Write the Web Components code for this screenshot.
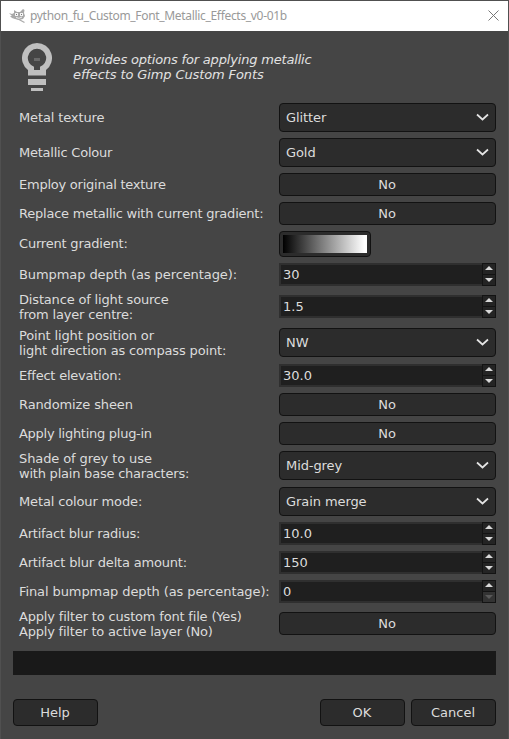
<!DOCTYPE html>
<html lang="en">
<head>
<meta charset="utf-8">
<title>python_fu_Custom_Font_Metallic_Effects_v0-01b</title>
<style>
html,body{margin:0;height:100%;background:#454545;overflow:hidden}
body{font:13px/15px "DejaVu Sans",sans-serif;color:#dcdcdc}
</style>
</head>
<body>
<effect-dialog></effect-dialog>
<script>
function define(name, html, setup) {
  const t = document.createElement('template');
  t.innerHTML = html;
  customElements.define(name, class extends HTMLElement {
    connectedCallback() {
      if (this.shadowRoot) return;
      this.attachShadow({mode: 'open'}).append(t.content.cloneNode(true));
      if (setup) setup(this, this.shadowRoot);
    }
  });
}
const box = 'box-sizing:border-box;background:#2c2c2c;border:1px solid #121212;border-radius:4px;';

define('title-bar', `<style>
:host{display:flex;align-items:center;height:30px;background:#fff;color:#999;font:12px/16px "Noto Sans","Open Sans",sans-serif;padding:0 9px 0 8px}
span{flex:1;margin-left:4px;white-space:pre;letter-spacing:-.32px}
.x{margin-bottom:1px}
</style>
<svg width="17" height="15" viewBox="0 0 17 15"><path fill="#a9a9a9" d="M0 4L3 5L5 4L5 1L8 3L11 3L14 0L15.500 1L15 4L16 7L14 10L10 11L6 10L3 9L1 7L3 7Z"/><path fill="#f4f4f4" d="M6 4h3v3H6zM11 4h3v3h-3z"/><path d="M7 5h1v1H7zM12 5h1v1h-1z" fill="#777"/><path d="M5 8.500l5 2 5.500 3" stroke="#aaa" stroke-width="1.300" fill="none"/><path d="M7 8.500l3 .8 3-1.300" stroke="#eee" fill="none"/></svg>
<span><slot></slot></span>
<svg class="x" width="11" height="11" viewBox="0 0 11 11"><path d="M.5.5l10 10M10.500.5l-10 10" stroke="#777" fill="none"/></svg>`);

define('info-banner', `<style>
:host{display:flex;height:72px;padding:0 21px;box-sizing:border-box}
svg{margin-top:11px;flex:none}
p{margin:21px 0 0 20px;font-style:italic;white-space:pre;color:#e2e2e2}
</style>
<svg width="31" height="50" viewBox="0 0 31 50"><path fill="#bfbfbf" fill-rule="evenodd" d="M15 1a15 15 0 0 1 9 27v5.500H6V28A15 15 0 0 1 15 1zM15 6.800a9.200 9.200 0 0 0-3 17.900V28h6v-3.300a9.200 9.200 0 0 0-3-17.900z"/><path fill="#bfbfbf" d="M6 37h18v6H6zM9 46h12v3H9z"/><path fill="#696969" d="M12 16h6v3h-6z"/></svg>
<p><slot></slot></p>`);

define('text-line', `<style>:host{display:block;white-space:pre}</style><slot></slot>`,
  el => { el.style.letterSpacing = el.getAttribute('track') + 'px'; });

define('form-row', `<style>
:host{display:grid;grid-template-columns:260px 217px;align-items:center;white-space:pre}
.l{margin-top:var(--label-shift,0)}
.c{display:flex;align-self:start}
:host([two]) .c{padding-top:var(--control-top,0)}
</style><div class="l"><slot name="label"></slot></div><div class="c"><slot></slot></div>`);

define('combo-box', `<style>
:host{display:flex;align-items:center;justify-content:space-between;width:217px;height:29px;padding:0 6px;letter-spacing:-.08px;${box}}
svg{margin-right:-1px}
</style><span><slot></slot></span><svg width="14" height="9" viewBox="0 0 14 9"><path d="M1 1.500l5.500 5 5.500-5" fill="none" stroke="#e4e4e4" stroke-width="1.700"/></svg>`);

define('push-button', `<style>
:host{display:flex;align-items:center;justify-content:center;width:217px;height:23px;padding-right:1px;${box}}
:host([dialog]){width:85px;height:27px}
</style><slot></slot>`);

define('gradient-button', `<style>
:host{display:block;width:92px;height:26px;padding:3px;${box}}
div{height:18px;background:linear-gradient(90deg,#000,#777 44%,#fff 97%)}
</style><div></div>`);

define('spin-box', `<style>
:host{display:flex;box-sizing:border-box;width:217px;height:23px;background:#2f2f2f}
.v{flex:1;margin:2px 0 2px 2px;padding:2px 0 0 2px;background:#1f1f1f}
.s{width:14px;display:grid;grid-template-rows:12px 11px}
.s i{display:flex;align-items:flex-start;justify-content:center;box-sizing:border-box;border:1px solid #131313;background:#242424;padding:2px 1px 0 0}
.s i+i{border-top:0;padding-top:3px}
path{fill:#d8d8d8}
:host([min]) i+i{background:#333}
:host([min]) i+i path{fill:#595959}
</style><div class="v"><slot></slot></div><div class="s"><i><svg width="8" height="4" viewBox="0 0 8 4"><path d="M4 0L8 4H0z"/></svg></i><i><svg width="8" height="4" viewBox="0 0 8 4"><path d="M0 0h8L4 4z"/></svg></i></div>`);

define('status-well', `<style>:host{display:block;height:24px;background:#191919}</style>`);

define('effect-dialog', `<style>
:host{display:block;box-sizing:border-box;width:509px;height:739px;background:#454545;border:1px solid #505050;border-bottom:0}
.rows{display:grid;gap:6px;padding-left:18px}
.foot{margin:12px 12px 0}
.buttons{display:flex;gap:6px;margin-top:24px}
.buttons :first-child{margin-right:auto}
</style>
<title-bar>python_fu_Custom_Font_Metallic_Effects_v0-01b</title-bar>
<info-banner><text-line track="-.18">Provides options for applying metallic</text-line><text-line track="-.11">effects to Gimp Custom Fonts</text-line></info-banner>
<div class="rows">
<form-row><text-line slot="label" track="-.13">Metal texture</text-line><combo-box>Glitter</combo-box></form-row>
<form-row><text-line slot="label" track="-.23">Metallic Colour</text-line><combo-box>Gold</combo-box></form-row>
<form-row><text-line slot="label" track="-.24">Employ original texture</text-line><push-button>No</push-button></form-row>
<form-row><text-line slot="label" track="-.23">Replace metallic with current gradient:</text-line><push-button>No</push-button></form-row>
<form-row style="--label-shift:-2px"><text-line slot="label" track="-.2">Current gradient:</text-line><gradient-button></gradient-button></form-row>
<form-row><text-line slot="label" track="-.08">Bumpmap depth (as percentage):</text-line><spin-box>30</spin-box></form-row>
<form-row two style="--control-top:3px"><text-line slot="label" track="-.17">Distance of light source</text-line><text-line slot="label" track="-.17">from layer centre:</text-line><spin-box>1.5</spin-box></form-row>
<form-row two><text-line slot="label" track="-.15">Point light position or</text-line><text-line slot="label" track="-.15">light direction as compass point:</text-line><combo-box>NW</combo-box></form-row>
<form-row><text-line slot="label" track="-.23">Effect elevation:</text-line><spin-box>30.0</spin-box></form-row>
<form-row><text-line slot="label" track="-.12">Randomize sheen</text-line><push-button>No</push-button></form-row>
<form-row><text-line slot="label" track="-.27">Apply lighting plug-in</text-line><push-button>No</push-button></form-row>
<form-row two><text-line slot="label" track="-.1">Shade of grey to use</text-line><text-line slot="label" track="-.22">with plain base characters:</text-line><combo-box>Mid-grey</combo-box></form-row>
<form-row><text-line slot="label" track="-.14">Metal colour mode:</text-line><combo-box>Grain merge</combo-box></form-row>
<form-row><text-line slot="label" track="-.23">Artifact blur radius:</text-line><spin-box>10.0</spin-box></form-row>
<form-row><text-line slot="label" track="-.19">Artifact blur delta amount:</text-line><spin-box>150</spin-box></form-row>
<form-row><text-line slot="label" track="-.09">Final bumpmap depth (as percentage):</text-line><spin-box min>0</spin-box></form-row>
<form-row two style="--control-top:3px"><text-line slot="label" track="-.18">Apply filter to custom font file (Yes)</text-line><text-line slot="label" track="-.21">Apply filter to active layer (No)</text-line><push-button>No</push-button></form-row>
</div>
<div class="foot"><status-well></status-well>
<div class="buttons"><push-button dialog>Help</push-button><push-button dialog>OK</push-button><push-button dialog>Cancel</push-button></div></div>`);
</script>
</body>
</html>
